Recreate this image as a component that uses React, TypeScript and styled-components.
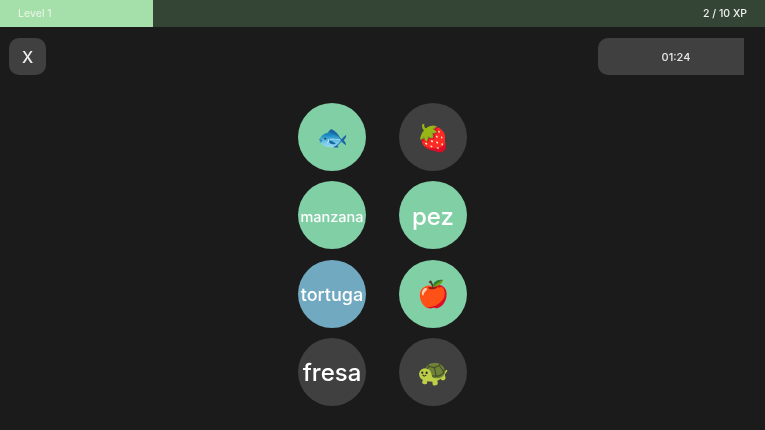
import React from 'react';
import styled, { createGlobalStyle } from 'styled-components';

type Tone = 'match' | 'picked' | 'idle';

const TILES: { label: string; tone: Tone; size: number; word?: boolean }[] = [
  { label: '🐟', tone: 'match', size: 25 },
  { label: '🍓', tone: 'idle', size: 26 },
  { label: 'manzana', tone: 'match', size: 14.5, word: true },
  { label: 'pez', tone: 'match', size: 24, word: true },
  { label: 'tortuga', tone: 'picked', size: 18, word: true },
  { label: '🍎', tone: 'match', size: 26 },
  { label: 'fresa', tone: 'idle', size: 24, word: true },
  { label: '🐢', tone: 'idle', size: 26 },
];

const TONES: Record<Tone, string> = {
  match: '#80cfa5',
  picked: '#71a9c0',
  idle: '#404040',
};

export default function App() {
  return (
    <Page>
      <GlobalStyle />
      <XpTrack>
        <XpFill>
          <XpLabel>Level 1</XpLabel>
        </XpFill>
        <XpCount>2 / 10 XP</XpCount>
      </XpTrack>
      <TopRow>
        <CloseButton>X</CloseButton>
        <Timer>01:24</Timer>
      </TopRow>
      <Board>
        {TILES.map((tile) => (
          <Tile key={tile.label} tone={tile.tone} size={tile.size} word={tile.word}>
            {tile.label}
          </Tile>
        ))}
      </Board>
    </Page>
  );
}

const GlobalStyle = createGlobalStyle`
  html, body {
    margin: 0;
    padding: 0;
    background: #1b1b1b;
  }
`;

const Page = styled.div`
  width: 765px;
  height: 430px;
  overflow: hidden;
  background: #1b1b1b;
  color: #fff;
  font-family: Inter, 'Noto Sans', sans-serif;
  display: flex;
  flex-direction: column;
  filter: blur(0.7px);
`;

const XpTrack = styled.div`
  height: 27px;
  flex: none;
  background: #354535;
  display: flex;
  align-items: center;
  justify-content: space-between;
`;

const XpFill = styled.div`
  width: 153px;
  height: 100%;
  background: #a5dfa9;
  display: flex;
  align-items: center;
  padding-left: 18px;
  box-sizing: border-box;
`;

const XpLabel = styled.span`
  font-size: 10.5px;
  font-weight: 500;
  color: #e4f3e2;
`;

const XpCount = styled.span`
  font-size: 10.5px;
  font-weight: 500;
  padding-right: 18px;
  color: #f0f0f0;
`;

const TopRow = styled.div`
  display: flex;
  justify-content: space-between;
  align-items: center;
  padding: 11px 21px 0 9px;
`;

const CloseButton = styled.button`
  width: 37px;
  height: 37px;
  border: none;
  border-radius: 10px;
  background: #404040;
  color: #f0f0f0;
  font: 500 16px Inter, sans-serif;
  padding: 0;
`;

const Timer = styled.div`
  width: 146px;
  height: 37px;
  box-sizing: border-box;
  padding-left: 10px;
  border-radius: 10px 0 0 10px;
  background: #404040;
  display: flex;
  align-items: center;
  justify-content: center;
  font-size: 11px;
  font-weight: 500;
  color: #e8e8e8;
`;

const Board = styled.div`
  display: grid;
  grid-template-columns: 68px 68px;
  grid-auto-rows: 68px;
  column-gap: 33px;
  row-gap: 10.3px;
  justify-content: center;
  margin-top: 28px;
`;

const Tile = styled.div<{ tone: Tone; size: number; word?: boolean }>`
  width: 68px;
  height: 68px;
  border-radius: 50%;
  background: ${(p) => TONES[p.tone]};
  display: flex;
  align-items: center;
  justify-content: center;
  font-size: ${(p) => p.size}px;
  padding-top: ${(p) => (p.word ? '2px' : '0')};
  box-sizing: border-box;
  font-weight: 500;
  color: #fff;
  white-space: nowrap;
`;
